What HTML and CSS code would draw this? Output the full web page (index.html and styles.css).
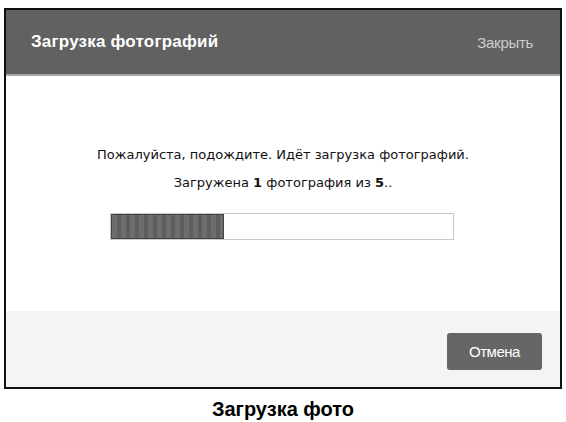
FILE: index.html
```html
<!DOCTYPE html>
<html lang="ru">
<head>
  <meta charset="UTF-8" />
  <title>Загрузка фото</title>
  <link rel="stylesheet" href="styles.css">
</head>
<body>

  <!-- окно загрузки -->
  <div class="dialog">
    <div class="dialog-head">
      <span class="dialog-title">Загрузка фотографий</span>
      <span class="dialog-close">Закрыть</span>
    </div>

    <div class="dialog-body">
      <p class="msg">Пожалуйста, подождите. Идёт загрузка фотографий.</p>
      <p class="msg">Загружена <b>1</b> фотография из <b>5</b>..</p>
      <div class="progress">
        <div class="progress-fill" style="width: 33%"></div>
      </div>
    </div>

    <div class="dialog-foot">
      <button class="btn">Отмена</button>
    </div>
  </div>

  <div class="caption">Загрузка фото</div>

</body>
</html>
```

FILE: styles.css
```css
html, body {
  margin: 0;
  padding: 0;
  background: #fff;
  font-family: "DejaVu Sans", Tahoma, sans-serif;
}

.dialog {
  margin: 8px 0 0 4px;
  width: 554px;
  border: 2px solid #111;
}

.dialog-head {
  display: flex;
  justify-content: space-between;
  align-items: center;
  height: 64px;
  padding: 0 27px 0 25px;
  background: #616161;
  border-bottom: 2px solid #a5a5a5;
}

.dialog-title {
  font-family: "Liberation Sans", Arial, sans-serif;
  font-weight: bold;
  font-size: 17px;
  letter-spacing: 0.2px;
  color: #fff;
}

.dialog-close {
  font-family: "Liberation Sans", Arial, sans-serif;
  font-size: 15px;
  letter-spacing: -0.3px;
  color: #cdcdcd;
}

.dialog-body {
  height: 235px;
  padding-top: 71px;
  box-sizing: border-box;
  text-align: center;
}

.msg {
  margin: 0 0 13px;
  font-size: 13px;
  color: #111;
}

.progress {
  width: 342px;
  height: 25px;
  margin: 23px 0 0 104px;
  border: 1px solid #c8c8c8;
  text-align: left;
}

.progress-fill {
  height: 100%;
  box-sizing: border-box;
  border: 1px solid #444;
  background: repeating-linear-gradient(90deg, #6e6e6e 0, #6e6e6e 5px, #5e5e5e 5px, #5e5e5e 9px);
}

.dialog-foot {
  display: flex;
  justify-content: flex-end;
  height: 76px;
  padding: 22px 18px 0 0;
  box-sizing: border-box;
  background: #f4f4f4;
}

.btn {
  width: 95px;
  height: 37px;
  border: none;
  border-radius: 3px;
  background: #666;
  color: #fff;
  font-family: "Liberation Sans", Arial, sans-serif;
  font-size: 15px;
  letter-spacing: -0.5px;
}

.caption {
  margin-top: 9px;
  text-align: center;
  font-family: "Liberation Sans", Arial, sans-serif;
  font-weight: bold;
  font-size: 20px;
  color: #000;
}
```
